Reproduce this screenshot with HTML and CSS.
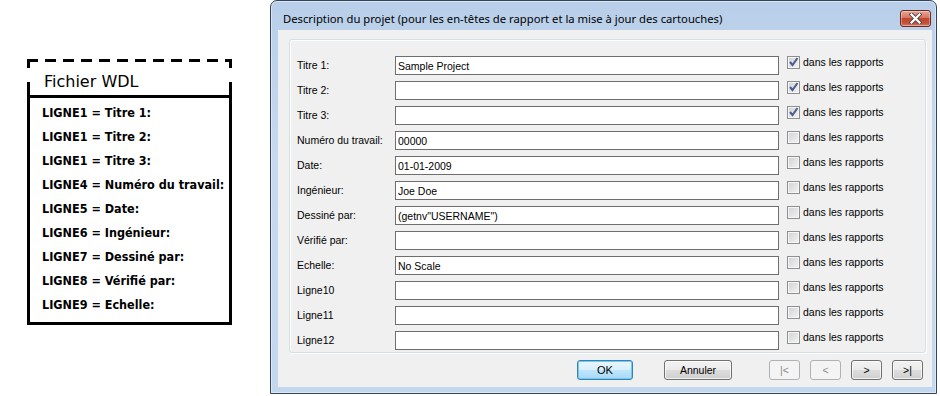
FILE: index.html
```html
<!DOCTYPE html>
<html lang="fr">
<head>
    <meta charset="UTF-8">
    <title>Description du projet</title>
    <link rel="stylesheet" href="styles.css">
</head>
<body>
    <div class="page">
        <div class="wdl">
            <div class="wdl-head">Fichier WDL</div>
            <div class="wdl-body">
                <div>LIGNE1 = Titre 1:</div>
                <div>LIGNE1 = Titre 2:</div>
                <div>LIGNE1 = Titre 3:</div>
                <div>LIGNE4 = Numéro du travail:</div>
                <div>LIGNE5 = Date:</div>
                <div>LIGNE6 = Ingénieur:</div>
                <div>LIGNE7 = Dessiné par:</div>
                <div>LIGNE8 = Vérifié par:</div>
                <div>LIGNE9 = Echelle:</div>
            </div>
        </div>

        <div class="window">
            <div class="titlebar">
                <span class="title">Description du projet (pour les en-têtes de rapport et la mise à jour des cartouches)</span>
                <button class="close">
                    <svg width="13" height="11" viewBox="0 0 13 11">
                        <path d="M2.5 1.5 L10.5 9.5 M10.5 1.5 L2.5 9.5" stroke="#4a4a4a" stroke-width="4" stroke-linecap="square"/>
                        <path d="M2.5 1.5 L10.5 9.5 M10.5 1.5 L2.5 9.5" stroke="#fff" stroke-width="2.2" stroke-linecap="square"/>
                    </svg>
                </button>
            </div>
            <div class="client">
                <div class="group">
                    <div class="row">
                        <label>Titre 1:</label>
                        <input type="text" value="Sample Project">
                        <span class="cb"><svg width="11" height="11" viewBox="0 0 11 11"><path d="M2 5 L4.5 8 L9.5 1" fill="none" stroke="#4b5d90" stroke-width="2"/></svg></span>
                        <span class="cb-text">dans les rapports</span>
                    </div>
                    <div class="row">
                        <label>Titre 2:</label>
                        <input type="text" value="">
                        <span class="cb"><svg width="11" height="11" viewBox="0 0 11 11"><path d="M2 5 L4.5 8 L9.5 1" fill="none" stroke="#4b5d90" stroke-width="2"/></svg></span>
                        <span class="cb-text">dans les rapports</span>
                    </div>
                    <div class="row">
                        <label>Titre 3:</label>
                        <input type="text" value="">
                        <span class="cb"><svg width="11" height="11" viewBox="0 0 11 11"><path d="M2 5 L4.5 8 L9.5 1" fill="none" stroke="#4b5d90" stroke-width="2"/></svg></span>
                        <span class="cb-text">dans les rapports</span>
                    </div>
                    <div class="row">
                        <label>Numéro du travail:</label>
                        <input type="text" value="00000">
                        <span class="cb"></span>
                        <span class="cb-text">dans les rapports</span>
                    </div>
                    <div class="row">
                        <label>Date:</label>
                        <input type="text" value="01-01-2009">
                        <span class="cb"></span>
                        <span class="cb-text">dans les rapports</span>
                    </div>
                    <div class="row">
                        <label>Ingénieur:</label>
                        <input type="text" value="Joe Doe">
                        <span class="cb"></span>
                        <span class="cb-text">dans les rapports</span>
                    </div>
                    <div class="row">
                        <label>Dessiné par:</label>
                        <input type="text" value='(getnv"USERNAME")'>
                        <span class="cb"></span>
                        <span class="cb-text">dans les rapports</span>
                    </div>
                    <div class="row">
                        <label>Vérifié par:</label>
                        <input type="text" value="">
                        <span class="cb"></span>
                        <span class="cb-text">dans les rapports</span>
                    </div>
                    <div class="row">
                        <label>Echelle:</label>
                        <input type="text" value="No Scale">
                        <span class="cb"></span>
                        <span class="cb-text">dans les rapports</span>
                    </div>
                    <div class="row">
                        <label>Ligne10</label>
                        <input type="text" value="">
                        <span class="cb"></span>
                        <span class="cb-text">dans les rapports</span>
                    </div>
                    <div class="row">
                        <label>Ligne11</label>
                        <input type="text" value="">
                        <span class="cb"></span>
                        <span class="cb-text">dans les rapports</span>
                    </div>
                    <div class="row">
                        <label>Ligne12</label>
                        <input type="text" value="">
                        <span class="cb"></span>
                        <span class="cb-text">dans les rapports</span>
                    </div>
                </div>
                <div class="buttons">
                    <button class="btn btn-ok">OK</button>
                    <button class="btn btn-cancel">Annuler</button>
                    <button class="btn nav first" disabled>|&lt;</button>
                    <button class="btn nav" disabled>&lt;</button>
                    <button class="btn nav">&gt;</button>
                    <button class="btn nav">&gt;|</button>
                </div>
            </div>
        </div>
    </div>
</body>
</html>
```

FILE: styles.css
```css
body {
    margin: 0;
    background: #fff;
    font-family: "Liberation Sans", Arial, sans-serif;
}
.page {
    display: flex;
    align-items: flex-start;
    height: 396px;
    overflow: hidden;
}

/* left panel: WDL file */
.wdl {
    margin: 59px 0 0 27px;
    width: 205px;
    font-family: "DejaVu Sans", sans-serif;
}
.wdl-head {
    padding: 14px 0 5px 17px;
    height: 17px;
    font-size: 16px;
    line-height: 17px;
    border-bottom: 3px solid #000;
    background:
        repeating-linear-gradient(90deg, #000 0 11px, transparent 11px 18px) top left / 100% 3px no-repeat,
        linear-gradient(#000 0 9px, transparent 9px 23px, #000 23px) top left / 3px 100% no-repeat,
        linear-gradient(#000 0 9px, transparent 9px 23px, #000 23px) top right / 3px 100% no-repeat;
}
.wdl-body {
    border: 3px solid #000;
    border-top: none;
    padding: 3px 0 5px 12px;
    font-family: "DejaVu Sans Condensed", "DejaVu Sans", sans-serif;
    font-weight: bold;
    font-stretch: condensed;
    font-size: 12.5px;
    line-height: 24px;
    white-space: nowrap;
}

/* dialog window */
.window {
    margin-left: 38px;
    width: 667px;
    height: 394px;
    box-sizing: border-box;
    border: 1px solid #34455a;
    border-radius: 7px 7px 0 0;
    background: linear-gradient(#b9cfe9, #c6d9ef 40%, #c3d7ee);
    box-shadow: inset 0 0 0 1px rgba(255, 255, 255, 0.45);
}
.titlebar {
    height: 29px;
    display: flex;
    justify-content: space-between;
    align-items: flex-start;
    padding: 0 5px 0 12px;
}
.title {
    font-family: "Noto Sans", sans-serif;
    font-size: 11.25px;
    line-height: 16px;
    padding-top: 10px;
    color: #000;
    white-space: nowrap;
}
.close {
    margin-top: 9px;
    width: 31px;
    height: 17px;
    padding: 0;
    border: 1px solid #6b2a20;
    border-radius: 3px;
    background: linear-gradient(#e9a596 0%, #d7765f 45%, #c2452d 50%, #c4503a 80%, #d77a62 100%);
    box-shadow: inset 0 0 0 1px rgba(255, 255, 255, 0.35);
    display: flex;
    align-items: center;
    justify-content: center;
}
.client {
    margin: 0 4px 0 7px;
    height: 357px;
    box-sizing: border-box;
    background: #f0f0f0;
    padding: 9px 6px 0 11px;
    font-size: 10.5px;
    color: #000;
}
.group {
    border: 1px solid #d5dfe5;
    border-radius: 3px;
    box-shadow: inset 1px 1px 0 #fff, 1px 1px 0 #fff;
    padding: 16px 0 2px 7px;
    display: flex;
    flex-direction: column;
    gap: 6px;
}
.row {
    display: flex;
    align-items: flex-start;
    height: 19px;
}
.row label {
    width: 98px;
    line-height: 19px;
    white-space: nowrap;
}
.row input {
    width: 384px;
    height: 19px;
    box-sizing: border-box;
    margin: 0;
    padding: 0 2px;
    border: 1px solid #6e6e6e;
    background: #fff;
    font-family: "Liberation Sans", Arial, sans-serif;
    font-size: 10.5px;
    color: #000;
    outline: none;
}
.cb {
    margin-left: 8px;
    width: 13px;
    height: 13px;
    box-sizing: border-box;
    border: 1px solid #8e8f8f;
    box-shadow: inset 0 0 0 1px #f6f6f6;
    background: linear-gradient(135deg, #cfd1d4, #f4f4f4);
}
.cb svg {
    display: block;
}
.cb-text {
    margin-left: 3px;
    line-height: 13px;
    white-space: nowrap;
}

/* bottom buttons */
.buttons {
    display: flex;
    margin-top: 7px;
}
.btn {
    height: 20px;
    box-sizing: border-box;
    padding: 0;
    border: 1px solid #707070;
    border-radius: 3px;
    background: linear-gradient(#f2f2f2 0%, #ebebeb 48%, #dddddd 52%, #cfcfcf 100%);
    box-shadow: inset 0 0 0 1px rgba(255, 255, 255, 0.7);
    font-family: "Liberation Sans", Arial, sans-serif;
    font-size: 10.5px;
    color: #000;
}
.btn-ok {
    margin-left: 288px;
    width: 56px;
    border-color: #3c7fb1;
    background: linear-gradient(#eaf6fd 0%, #d9f0fc 48%, #bee6fd 52%, #a7d9f5 100%);
    box-shadow: inset 0 0 0 1px #6ccbf5;
    font-size: 11px;
}
.btn-cancel {
    margin-left: 31px;
    width: 68px;
}
.nav {
    margin-left: 10px;
    width: 31px;
}
.nav.first {
    margin-left: 37px;
}
.nav:disabled {
    border-color: #adb2b5;
    background: #f4f4f4;
    box-shadow: none;
    color: #8a8a8a;
}
```
